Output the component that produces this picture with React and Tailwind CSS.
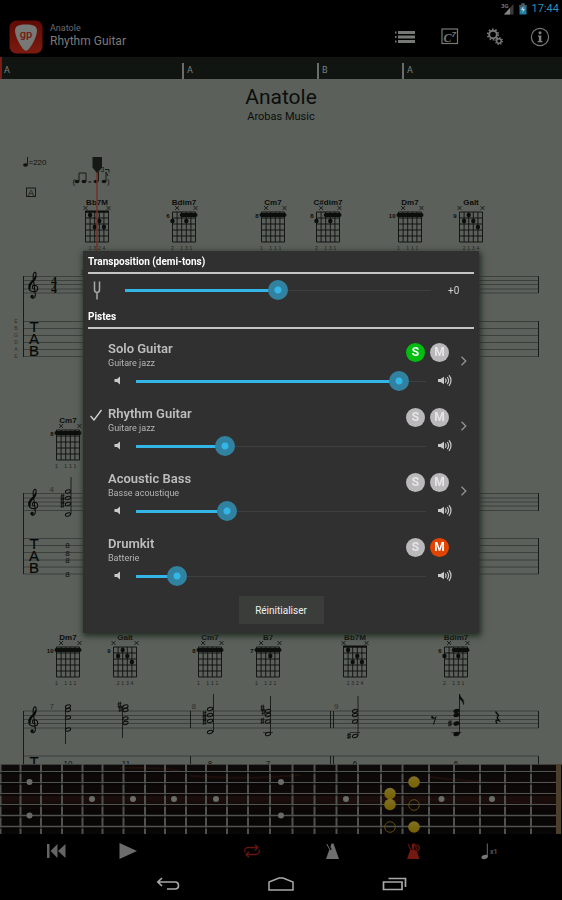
// App.jsx
import React, { useState } from 'react';

const STRING_GAP = 4.6;
const FRET_GAP = 6;

const SHAPES = {
  Bb7M: { mutes: [0, 5], dots: [[1, 0], [3, 1], [2, 2], [4, 2]], fingers: [[1, 1], [2, 3], [3, 2], [4, 4]], nut: true },
  dim: { mutes: [1, 5], barre: [2, 5], dots: [[0, 1], [3, 1]], fingers: [[0, 2], [2, 1], [3, 3], [4, 1]] },
  m7: { mutes: [1, 5], barre: [0, 5], dots: [], fingers: [[0, 1], [2, 1], [3, 1], [4, 1]] },
  seven: { mutes: [1, 5], barre: [0, 5], dots: [[3, 1]], fingers: [[0, 1], [2, 1], [3, 2], [4, 1]] },
  alt: { mutes: [0, 5], dots: [[2, 0], [1, 1], [3, 1], [4, 2]], fingers: [[1, 2], [2, 1], [3, 3], [4, 4]] },
};

const CHORDS = [
  { name: 'Bb7M', shape: 'Bb7M', x: 85.5, y: 212 },
  { name: 'Bdim7', shape: 'dim', fret: 6, x: 172.5, y: 212 },
  { name: 'Cm7', shape: 'm7', fret: 8, x: 261.5, y: 212 },
  { name: 'C#dim7', shape: 'dim', fret: 8, x: 316.5, y: 212 },
  { name: 'Dm7', shape: 'm7', fret: 10, x: 398.5, y: 212 },
  { name: 'Galt', shape: 'alt', fret: 9, x: 459.5, y: 212 },
  { name: 'Cm7', shape: 'm7', fret: 8, x: 56.5, y: 430 },
  { name: 'Dm7', shape: 'm7', fret: 10, x: 56.5, y: 647 },
  { name: 'Galt', shape: 'alt', fret: 9, x: 113.5, y: 647 },
  { name: 'Cm7', shape: 'm7', fret: 8, x: 198.5, y: 647 },
  { name: 'B7', shape: 'seven', fret: 7, x: 256.5, y: 647 },
  { name: 'Bb7M', shape: 'Bb7M', x: 343.5, y: 647 },
  { name: 'Bdim7', shape: 'dim', fret: 6, x: 444.5, y: 647 },
];

const VOICINGS = [
  { x: 68, notes: [491.5, 498, 504, 514.5], stem: [71, 477, 514], sharps: [[62.5, 497], [62.5, 501], [62.5, 505]] },
  { x: 68, notes: [706.5, 710, 717.5, 729.5], stem: [65.5, 706, 744], sharps: [] },
  { x: 125.5, notes: [706.5, 710, 718.5, 723], stem: [122.5, 706, 738], sharps: [[119.5, 705], [120.5, 709]] },
  { x: 210, notes: [709, 715, 721, 732], stem: [213.5, 694, 732], sharps: [[204.5, 714], [204.5, 718], [204.5, 722]] },
  { x: 268, notes: [711, 715, 721.5, 734], stem: [270.5, 696, 734], sharps: [[262.5, 708], [263.5, 712], [262.5, 721]], ledger: 732.5 },
  { x: 355, notes: [711, 715, 721.5, 736], stem: [358, 696, 736], sharps: [[349, 736]], ledger: 732.5 },
  { x: 456.5, notes: [711, 715, 723.5, 734], stem: [459.5, 694, 734], sharps: [[450, 723.5]], ledger: 732.5, filled: true },
];

const FRETS = [0.5, 20.5, 41, 62, 82.5, 102.5, 123.5, 145, 165, 186, 206, 227, 248, 270, 292.5, 314.5, 336.5, 358, 381, 402.5, 429, 454, 480, 505, 531];
const STRINGS = [771.5, 782.5, 793.5, 804.5, 815.5, 826.5];
const INLAYS = [[29.5, 782], [29.5, 815.5], [92, 799], [133, 799], [174, 799], [216, 799], [281, 782], [281, 815.5], [346, 799], [441.5, 799], [492, 799]];

const TRACKS = [
  { name: 'Solo Guitar', instrument: 'Guitare jazz', volume: 115, solo: true, more: true },
  { name: 'Rhythm Guitar', instrument: 'Guitare jazz', volume: 39, current: true, more: true },
  { name: 'Acoustic Bass', instrument: 'Basse acoustique', volume: 40, more: true },
  { name: 'Drumkit', instrument: 'Batterie', volume: 18, mute: true },
];

function ChordDiagram({ name, shape, fret, x, y }) {
  const s = SHAPES[shape];
  const col = (i) => x + i * STRING_GAP;
  const row = (i) => y + 3 + i * FRET_GAP;
  return (
    <g stroke="#0c0e0c" fill="#0c0e0c">
      <text x={x + 11.5} y={y - 7} fontSize="8" fontWeight="700" textAnchor="middle" stroke="none">{name}</text>
      {fret && <text x={x - 3} y={y + 6} fontSize="6" fontWeight="700" textAnchor="end" stroke="none">{fret}</text>}
      {s.mutes.map((m) => (
        <path key={m} d={`M${col(m) - 2} ${y - 6}l4 4m0-4l-4 4`} strokeWidth=".8" />
      ))}
      {[0, 1, 2, 3, 4, 5].map((i) => (
        <path key={i} d={`M${col(i)} ${y}v30M${x} ${y + i * FRET_GAP}h23`} strokeWidth=".9" />
      ))}
      {s.nut && <path d={`M${x - 0.5} ${y - 0.5}h24`} strokeWidth="2" />}
      {s.barre && <path d={`M${col(s.barre[0])} ${row(0)}H${col(s.barre[1])}`} strokeWidth="4" strokeLinecap="round" />}
      {s.dots.map(([c, r]) => <circle key={`${c}-${r}`} cx={col(c)} cy={row(r)} r="2.2" stroke="none" />)}
      {s.fingers.map(([c, n]) => (
        <text key={c} x={col(c)} y={y + 37.5} fontSize="5" textAnchor="middle" stroke="none" opacity=".75">{n}</text>
      ))}
    </g>
  );
}

function Clef({ y }) {
  return (
    <g transform={`translate(28.5 ${y - 5.5})`} fill="none" stroke="#090b09">
      <path d="M5.4 18.2C3.2 17.4 3.4 14.2 5.8 14.2C10.4 14.2 10.4 20.6 5.4 20.6C-.6 20.6-.8 14.8 2 11.6C4.6 9 8 7 7.6 2.8C7.2 0 5.4 1.4 4.8 3.6C4.2 6 5 9 5.6 13L6.8 23.4C7.2 27.8 3 28.4 2.6 25.6" strokeWidth="1.1" />
      <path d="M1.4 18C.6 15.4 2.4 12 5 9.8C6.4 8.6 7.2 7 7.4 5" strokeWidth="1.8" />
      <circle cx="3.6" cy="25.4" r="1.6" fill="#090b09" stroke="none" />
    </g>
  );
}

function Voicing({ x, notes, stem, sharps, ledger, filled }) {
  return (
    <g stroke="#0c0e0c" fill="none">
      {notes.map((n) => (
        <ellipse key={n} cx={x} cy={n} rx="2.7" ry="1.6" strokeWidth="1" fill={filled ? '#0c0e0c' : 'none'} transform={`rotate(-20 ${x} ${n})`} />
      ))}
      <path d={`M${stem[0]} ${stem[1]}V${stem[2]}`} strokeWidth=".8" />
      {sharps.map(([a, b]) => (
        <path key={`${a}-${b}`} d={`M${a - 0.8} ${b - 3}v6M${a + 0.8} ${b - 3.4}v6M${a - 2} ${b - 0.8}l4-.8M${a - 2} ${b + 1.6}l4-.8`} strokeWidth=".8" />
      ))}
      {ledger && <path d={`M${x - 5} ${ledger}h10`} strokeWidth=".6" />}
      {filled && <path d={`M${stem[0]} ${stem[1]}c.5 4 5.5 5 4 10.500c-.5-3-2-4.500-4-5.500z`} fill="#0c0e0c" strokeWidth=".6" />}
    </g>
  );
}

function Lines({ ys }) {
  return <path d={ys.map((y) => `M23.500 ${y}H538.500`).join('')} stroke="#353935" strokeWidth=".8" fill="none" />;
}

function Score() {
  return (
    <svg viewBox="0 129 562 635" className="block h-auto w-full font-['Liberation_Sans',sans-serif]" role="img" aria-label="Partition">
      {/* tempo, section mark, swing feel */}
      <g fill="#111411">
        <ellipse cx="25.500" cy="165" rx="2.400" ry="1.700" />
        <path d="M27.500 165v-8" stroke="#111411" strokeWidth=".9" />
        <text x="28.500" y="164.500" fontSize="8">=220</text>
        <rect x="26.500" y="188" width="9" height="8.500" fill="none" stroke="#111411" strokeWidth=".9" />
        <text x="31" y="195.500" fontSize="9" textAnchor="middle">A</text>
        <text x="72.500" y="184" fontSize="8">(</text>
        <text x="107" y="184" fontSize="8">)</text>
        <text x="88" y="184" fontSize="6" fontWeight="700">=</text>
        <ellipse cx="77" cy="181.500" rx="2.400" ry="1.800" />
        <ellipse cx="84" cy="181.500" rx="2.400" ry="1.800" />
        <ellipse cx="96" cy="181.500" rx="2.400" ry="1.800" />
        <ellipse cx="104" cy="181.500" rx="2.400" ry="1.800" />
        <path d="M79 181v-8h7v8M98.500 181v-9M106 181v-9l2 4M105 169.500h4v3" fill="none" stroke="#111411" strokeWidth=".9" />
        <text x="100.500" y="172" fontSize="7">3</text>
      </g>

      {CHORDS.map((c) => <ChordDiagram key={`${c.x}-${c.y}`} {...c} />)}

      <Lines ys={[276.5, 280.5, 284.5, 289, 293]} />
      <Lines ys={[321.5, 328.5, 335.5, 342.5, 349.5, 356.5]} />
      <Lines ys={[493.5, 498, 502, 506, 510.5]} />
      <Lines ys={[538.5, 545.5, 552.5, 560, 567, 574]} />
      <Lines ys={[711, 715.5, 719.5, 723.5, 728]} />
      <Lines ys={[756]} />
      <path
        d="M23.500 276V357M23.500 493V574M23.500 711V764M538.500 276V293M538.500 321V357M538.500 493V511M538.500 538V574M538.500 711V728M538.500 756V764M190.500 711V728M190.500 756V764M330.500 711V728M333.500 711V728M330.500 756V764M333.500 756V764"
        stroke="#111411" strokeWidth=".9" fill="none"
      />
      <Clef y={276.5} />
      <Clef y={493.5} />
      <Clef y={711} />

      <g fontSize="12" fontWeight="700" fill="#090b09" className="font-['Liberation_Serif',serif]">
        <text x="51" y="285">4</text>
        <text x="51" y="293">4</text>
      </g>
      <g fontSize="15" fill="#060806" stroke="#060806" strokeWidth=".2" textAnchor="middle">
        {[332, 549].map((y) => (
          <React.Fragment key={y}>
            <text x="34" y={y}>T</text>
            <text x="34" y={y + 12}>A</text>
            <text x="34" y={y + 24}>B</text>
          </React.Fragment>
        ))}
        <text x="34" y="767">T</text>
      </g>
      <g fontSize="5" fill="#2c302c" textAnchor="middle">
        {['E', 'B', 'G', 'D', 'A', 'E'].map((n, i) => <text key={i} x="16" y={323 + i * 7}>{n}</text>)}
      </g>
      <g fontSize="8" fill="#2c302c">
        <text x="80" y="275">1</text>
        <text x="49.500" y="492">4</text>
        <text x="49.500" y="709">7</text>
        <text x="191.500" y="709">8</text>
        <text x="334" y="709">9</text>
      </g>
      {VOICINGS.map((v) => <Voicing key={`${v.x}-${v.notes[0]}`} {...v} />)}
      {/* rests */}
      <path d="M432 717.500c1 1.500 3 1 4-.8l-2.600 8" fill="none" stroke="#0c0e0c" strokeWidth="1" />
      <circle cx="432.300" cy="717.200" r="1.200" fill="#0c0e0c" />
      <path d="M495.500 711.500l3 4c-2 1.800-1.500 2.500.5 5c-3-1-4 .5-2 3" fill="none" stroke="#0c0e0c" strokeWidth="1.400" />

      <g fontSize="8" fill="#0c0e0c" textAnchor="middle">
        {[548, 555.5, 562.5, 577].map((y) => <text key={y} x="67.500" y={y}>8</text>)}
        <text x="68" y="766">10</text>
        <text x="126" y="766">11</text>
        <text x="210" y="766">8</text>
        <text x="268" y="766">7</text>
        <text x="355" y="766">6</text>
        <text x="456" y="766">6</text>
      </g>

      {/* playhead */}
      <path d="M97 170V280" stroke="#74302a" strokeWidth="1.500" />
      <path d="M92.500 157h9.500v10.500l-4 5h-1.500l-4-5z" fill="#161816" />
    </svg>
  );
}

function Fretboard() {
  return (
    <svg viewBox="0 764 562 70" className="block h-auto w-full" role="img" aria-label="Manche">
      <defs>
        <linearGradient id="wood" x1="0" y1="0" x2="0" y2="1">
          <stop offset="0" stopColor="#0e0a09" />
          <stop offset=".38" stopColor="#0b0807" />
          <stop offset=".48" stopColor="#1c0e0b" />
          <stop offset=".58" stopColor="#150b09" />
          <stop offset=".66" stopColor="#090605" />
          <stop offset="1" stopColor="#080606" />
        </linearGradient>
        <linearGradient id="gold" x1="0" y1="0" x2="0" y2="1">
          <stop offset="0" stopColor="#847127" />
          <stop offset=".5" stopColor="#7a6812" />
          <stop offset="1" stopColor="#776300" />
        </linearGradient>
      </defs>
      <rect x="0" y="764" width="562" height="70" fill="url(#wood)" />
      <path d="M120 768q40-1 60 3M190 776q60 4 110-1M430 777q60 8 126 5M330 803q110-8 226 2" fill="none" stroke="#1e0f0b" strokeWidth="2" />
      <path d="M0 764.500H562" stroke="#3d403d" />
      <rect x="556" y="764" width="5" height="70" fill="#4b3e2a" />
      {FRETS.map((x) => <path key={x} d={`M${x} 764v70`} stroke="#4f524f" strokeWidth="2" />)}
      {STRINGS.map((y, i) => (
        <g key={y}>
          <path d={`M0 ${y + 1.5}H556`} stroke="#040404" strokeWidth="1" />
          <path d={`M0 ${y}H556`} stroke="#505350" strokeWidth={i > 3 ? 1.6 : 1.2} />
        </g>
      ))}
      {INLAYS.map(([x, y]) => <circle key={`${x}-${y}`} cx={x} cy={y} r="3" fill="#686b68" />)}
      {[[390, 793.5], [390, 804.5], [414, 782], [414, 827]].map(([x, y]) => (
        <circle key={`${x}-${y}`} cx={x} cy={y} r="5.800" fill="url(#gold)" />
      ))}
      {[[414, 805], [390, 827]].map(([x, y]) => (
        <circle key={`${x}-${y}`} cx={x} cy={y} r="5.300" fill="none" stroke="#5e4d0c" />
      ))}
    </svg>
  );
}

function Slider({ label, max, value, onChange }) {
  const ratio = value / max;
  return (
    <div className="relative flex h-5 min-w-0 flex-1 items-center">
      <span className="absolute inset-x-[10px] h-px bg-[#3f3f3f]" />
      <span className="absolute left-[10px] h-[3px] bg-[#33b5e5]" style={{ width: `calc((100% - 20px) * ${ratio})` }} />
      <input
        type="range"
        aria-label={label}
        min="0"
        max={max}
        value={value}
        onChange={(e) => onChange(Number(e.target.value))}
        className="relative h-5 w-full cursor-pointer appearance-none bg-transparent [&::-webkit-slider-thumb]:size-5 [&::-webkit-slider-thumb]:appearance-none [&::-webkit-slider-thumb]:rounded-full [&::-webkit-slider-thumb]:bg-[radial-gradient(circle,#33b5e5_3px,#3182a1_4px)]"
      />
    </div>
  );
}

function Speaker({ loud }) {
  return (
    <svg viewBox={loud ? '0 0 14 12' : '0 0 8 12'} className={loud ? 'h-3 w-[14px] shrink-0' : 'h-3 w-2 shrink-0'} fill="#c9c9c9" aria-hidden="true">
      {loud ? (
        <>
          <path d="M0 4h2.500L6 1.800v7.400L2.500 7H0z" />
          <path d="M7.300 3.500q1.500 2 0 4.200M9.200 2q2.800 3.500 0 7.200M11 .3q4 5 0 10.600" fill="none" stroke="#c9c9c9" strokeWidth="1.200" />
        </>
      ) : (
        <path d="M1.500 4H4L7 1.500v8L4 7H1.500z" />
      )}
    </svg>
  );
}

function Track({ track, onChange }) {
  const round = 'size-[19px] rounded-full text-center text-[12px] leading-[19px] font-bold';
  return (
    <li className="flex h-[65px] pt-3">
      <div className="w-[25px] shrink-0 pt-[3px] pl-[7px]">
        {track.current && (
          <svg viewBox="0 0 12 12" className="size-3" fill="none" stroke="#d0d0d0" strokeWidth="1.400" role="img" aria-label="Piste active">
            <path d="M.6 7L4 11L11.500 1" />
          </svg>
        )}
      </div>
      <div className="min-w-0 flex-1">
        <div className="flex h-7 items-start pr-[10px]">
          <div className="min-w-0 flex-1">
            <h3 className="text-[13px] leading-4 font-semibold text-[#bdbdbd]">{track.name}</h3>
            <p className="text-[9px] leading-3 text-[#b5b5b5]">{track.instrument}</p>
          </div>
          <div className="flex gap-[5px] pt-[2px]">
            <button
              type="button"
              aria-label={`Solo ${track.name}`}
              aria-pressed={!!track.solo}
              onClick={() => onChange({ solo: !track.solo })}
              className={`${round} ${track.solo ? 'bg-[#00bd10] text-white' : 'bg-[#bab8bb] text-[#e6e6e6]'}`}
            >
              S
            </button>
            <button
              type="button"
              aria-label={`Muet ${track.name}`}
              aria-pressed={!!track.mute}
              onClick={() => onChange({ mute: !track.mute })}
              className={`${round} ${track.mute ? 'bg-[#e24300] text-white' : 'bg-[#bab8bb] text-[#e6e6e6]'}`}
            >
              M
            </button>
          </div>
          <div className="ml-[10px] w-[10px] pt-[15px]">
            {track.more && (
              <button type="button" aria-label={`Options ${track.name}`} className="block">
                <svg viewBox="0 0 10 10" className="size-[10px]" fill="none" stroke="#989898" strokeWidth="1.200">
                  <path d="M2.500 .8L6.800 5L2.500 9.200" />
                </svg>
              </button>
            )}
          </div>
        </div>
        <div className="flex items-center pt-[2px] pr-[27px] pl-[5px]">
          <Speaker />
          <div className="mr-[2px] ml-[5px] flex flex-1">
            <Slider label={`Volume ${track.name}`} max={127} value={track.volume} onChange={(volume) => onChange({ volume })} />
          </div>
          <Speaker loud />
        </div>
      </div>
    </li>
  );
}

function SectionTitle({ children }) {
  return (
    <h2 className="mx-[5px] h-[23px] border-b-2 border-[#c4c4c4] pt-px text-[10px] leading-5 font-bold text-white">{children}</h2>
  );
}

function MixerDialog() {
  const [tone, setTone] = useState(12);
  const [tracks, setTracks] = useState(TRACKS);
  const update = (index, patch) => setTracks(tracks.map((t, i) => (i === index ? { ...t, ...patch } : t)));
  const reset = () => {
    setTone(12);
    setTracks(TRACKS);
  };

  return (
    <div className="fixed inset-x-0 top-4 bottom-8 flex items-center justify-center">
      <div role="dialog" aria-label="Pistes" className="w-full max-w-[396px] bg-[#303030] pb-[9px] shadow-[1px_2px_6px_1px_#1f2d21]">
        <SectionTitle>Transposition (demi-tons)</SectionTitle>
        <div className="flex h-8 items-center pl-[10px]">
          <svg viewBox="0 0 8 19" className="h-[19px] w-2 shrink-0" fill="none" stroke="#a8a8a8" strokeWidth="1.500" aria-hidden="true">
            <path d="M1.500 .5V8.500Q1.500 11.500 4 11.500Q6.500 11.500 6.500 8.500V.5M4 11.500V18.500" />
          </svg>
          <div className="mr-[7px] ml-[14px] flex flex-1">
            <Slider label="Transposition" max={24} value={tone} onChange={setTone} />
          </div>
          <output className="w-[31px] text-[10px] text-[#d0d0d0]">{tone >= 12 ? `+${tone - 12}` : tone - 12}</output>
        </div>
        <SectionTitle>Pistes</SectionTitle>
        <ul>
          {tracks.map((t, i) => <Track key={t.name} track={t} onChange={(patch) => update(i, patch)} />)}
        </ul>
        <div className="flex justify-center pt-[7px]">
          <button type="button" onClick={reset} className="h-7 w-[85px] bg-[#3b3d3b] text-[10px] text-[#f0f0f0]">
            Réinitialiser
          </button>
        </div>
      </div>
    </div>
  );
}

function StatusBar() {
  return (
    <div className="flex h-4 items-center justify-end gap-[5px] pt-[2px] pr-[3px]">
      <svg viewBox="0 0 13 12" className="h-3 w-[13px]" aria-hidden="true">
        <text x="0" y="5" fontSize="6" fontWeight="700" fill="#777" className="font-['Roboto',sans-serif]">3G</text>
        <path d="M3 11.500L12.500 1V11.500z" fill="#3a3a3a" />
        <path d="M3 11.500L9 5V11.500z" fill="#858585" />
      </svg>
      <svg viewBox="0 0 8 12" className="h-3 w-2" aria-hidden="true">
        <path d="M.5 2H2.500V.5H5.500V2H7.500V11.500H.5z" fill="#2380a4" />
        <path d="M.5 2H2.500V.5H5.500V2H7.500V4H.5z" fill="#4b5a60" />
        <path d="M4.500 3L2 7H4L3.200 10L6 6H4.200z" fill="#c8d2d5" />
      </svg>
      <span className="text-[11px] leading-[14px] text-[#2a8fb8]">17:44</span>
    </div>
  );
}

function Header() {
  const item = 'flex h-[41px] w-[45px] items-center justify-center';
  return (
    <header className="flex h-[41px] items-center pl-[9px]">
      <svg viewBox="0 0 34 34" className="size-[34px]" role="img" aria-label="Guitar Pro">
        <defs>
          <linearGradient id="logo" x1="0" y1="0" x2="0" y2="1">
            <stop offset="0" stopColor="#600a05" />
            <stop offset="1" stopColor="#7b1b10" />
          </linearGradient>
        </defs>
        <rect x=".5" y=".5" width="33" height="33" rx="7" fill="url(#logo)" />
        <path d="M17 4.500C24 4.500 28 6 28 10.500C28 17 22 27 19 29.800Q17 31.500 15 29.800C12 27 6 17 6 10.500C6 6 10 4.500 17 4.500z" fill="#777976" />
        <text x="17" y="18" fontSize="11" fontWeight="500" textAnchor="middle" fill="#74170f" className="font-['Roboto',sans-serif]">gp</text>
      </svg>
      <div className="flex-1 pb-[3px] pl-[7px]">
        <p className="text-[9px] leading-[11px] text-[#6c6c6c]">Anatole</p>
        <p className="text-[12px] leading-[14px] text-[#7a7a7a]">Rhythm Guitar</p>
      </div>
      <nav className="flex" aria-label="Outils">
        <button type="button" aria-label="Pistes" className={item}>
          <svg viewBox="0 0 22 14" className="h-[14px] w-[22px]" fill="#767976">
            <path d="M4 1h17v3H4zM4 5.500h17v3H4zM4 10h17v3H4zM1 1.500h1.500v2H1zM1 6h1.500v2H1zM1 10.500h1.500v2H1z" />
          </svg>
        </button>
        <button type="button" aria-label="Accords" className={item}>
          <svg viewBox="0 0 18 17" className="h-[17px] w-[18px]" fill="#767976">
            <rect x="1" y="1" width="15.500" height="14.500" fill="none" stroke="#767976" strokeWidth="1.200" />
            <text x="2.500" y="13.500" fontSize="12" fontWeight="700" fontStyle="italic" className="font-['Liberation_Serif',serif]">C</text>
            <text x="10.500" y="9" fontSize="8" fontWeight="700" fontStyle="italic" className="font-['Liberation_Sans',sans-serif]">7</text>
          </svg>
        </button>
        <button type="button" aria-label="Réglages" className={item}>
          <svg viewBox="0 0 18 18" className="size-[18px]" fill="none" stroke="#767976">
            <circle cx="7" cy="6.500" r="3.800" strokeWidth="1.900" />
            <circle cx="7" cy="6.500" r="5.200" strokeWidth="1.800" strokeDasharray="1.600 1.670" />
            <circle cx="13" cy="13" r="2.300" strokeWidth="1.400" />
            <circle cx="13" cy="13" r="3.400" strokeWidth="1.300" strokeDasharray="1.300 1.370" />
          </svg>
        </button>
        <button type="button" aria-label="Informations" className={item}>
          <svg viewBox="0 0 20 20" className="size-5" fill="#7d807d">
            <circle cx="10" cy="10" r="8.600" fill="none" stroke="#767976" strokeWidth="1.200" />
            <circle cx="10" cy="5.800" r="1.500" />
            <path d="M8 8.500h3.300V14h1.200v1.300H7.700V14h1.200V9.800H8z" />
          </svg>
        </button>
      </nav>
    </header>
  );
}

function SectionBar() {
  const mark = 'mt-[6px] flex h-4 items-center border-l-2 border-[#6a6d6a] pl-[3px]';
  return (
    <div className="grid h-[22px] grid-cols-[182fr_135fr_85fr_160fr] bg-[#101512] text-[9px] text-[#7d807d]">
      <div className="flex items-center border-l-2 border-[#7b1d12] pt-[5px] pl-[2px]">A</div>
      <div className={mark}>A</div>
      <div className={mark}>B</div>
      <div className={mark}>A</div>
    </div>
  );
}

function Transport() {
  const wide = 'flex h-[34px] w-[81px] items-center justify-center';
  const narrow = 'flex h-[34px] w-18 items-center justify-center';
  return (
    <div className="flex justify-between pr-[36px] pl-5">
      <div className="flex">
        <button type="button" aria-label="Début" className={narrow}>
          <svg viewBox="0 0 19 14" className="h-[14px] w-[19px]" fill="#656565">
            <path d="M0 0h2.500v14H0zM10.500 0v14L3.500 7zM18.500 0v14L11 7z" />
          </svg>
        </button>
        <button type="button" aria-label="Lecture" className={narrow}>
          <svg viewBox="0 0 18 16" className="h-4 w-[18px]" fill="#6c6c6c"><path d="M.5 0L18 8L.5 16z" /></svg>
        </button>
      </div>
      <div className="flex">
        <button type="button" aria-label="Boucle" className={wide}>
          <svg viewBox="0 0 18 14" className="h-[14px] w-[18px]" fill="none" stroke="#64170f" strokeWidth="1.300">
            <path d="M2 8.500Q.8 3.500 5.500 3.500H14M12 .8L15 3.500L12 6.200M16 5.500Q17.200 10.500 12.500 10.500H4M6 7.800L3 10.500L6 13.200" />
          </svg>
        </button>
        <button type="button" aria-label="Métronome" className={wide}>
          <svg viewBox="0 0 13 16" className="h-4 w-[13px]" fill="#6f6f6f">
            <path d="M5.500 .5h2L13 16H0z" />
            <path d="M1.500 1L4.800 7" stroke="#000" strokeWidth="2.200" />
            <path d="M.8 1L4.500 8" stroke="#6f6f6f" strokeWidth="1" />
          </svg>
        </button>
        <button type="button" aria-label="Décompte" className={wide}>
          <svg viewBox="0 0 13 16" className="h-4 w-[13px]" fill="#74190f">
            <path d="M5.500 .5h2L12.500 16H0z" />
            <path d="M1.800 1L5 7" stroke="#000" strokeWidth="2" />
            <path d="M1 1L4.500 8" stroke="#74190f" strokeWidth="1" />
            <circle cx="9.300" cy="5" r="3.200" fill="#1c0503" stroke="#74190f" />
            <path d="M9 3v2.500l1.200 1" fill="none" stroke="#74190f" strokeWidth=".9" />
          </svg>
        </button>
        <button type="button" aria-label="Vitesse x1" className={narrow}>
          <svg viewBox="0 0 18 18" className="size-[18px]" fill="#777">
            <ellipse cx="3.600" cy="15" rx="3.200" ry="2" transform="rotate(-12 3.600 15)" />
            <path d="M6.300 15V1.500" stroke="#777" strokeWidth=".9" />
            <text x="9" y="12" fontSize="7" fontWeight="700" fill="#555" className="font-['Roboto',sans-serif]">x1</text>
          </svg>
        </button>
      </div>
    </div>
  );
}

function NavBar() {
  const item = 'flex h-8 w-[113px] items-center justify-center';
  return (
    <nav className="flex justify-center" aria-label="Système">
      <button type="button" aria-label="Retour" className={item}>
        <svg viewBox="0 0 24 14" className="h-[14px] w-6" fill="none" stroke="#a8a8a8" strokeWidth="1.700">
          <path d="M6 1L1.800 5L6 9M2 5H19Q22.500 5 22.500 8.500Q22.500 12 19 12H11" />
        </svg>
      </button>
      <button type="button" aria-label="Accueil" className={item}>
        <svg viewBox="0 0 26 14" className="h-[14px] w-[26px]" fill="none" stroke="#a8a8a8" strokeWidth="1.500">
          <path d="M1 13V5L11 1H15L25 5V13z" />
        </svg>
      </button>
      <button type="button" aria-label="Applications récentes" className={item}>
        <svg viewBox="0 0 25 14" className="h-[14px] w-[25px]" fill="none" stroke="#a8a8a8" strokeWidth="1.700">
          <path d="M1.500 5h18.500v7.500H1.500zM6.500 1.500h17V10" />
        </svg>
      </button>
    </nav>
  );
}

export default function App() {
  return (
    <div className="flex min-h-screen flex-col bg-black font-['Roboto',sans-serif]">
      <StatusBar />
      <Header />
      <SectionBar />
      <main className="flex-1 bg-[#5b605b]">
        <div className="pt-1 pb-[6px] text-center text-[#0c0e0c]">
          <h1 className="text-[21px] leading-7">Anatole</h1>
          <p className="text-[11px] leading-3">Arobas Music</p>
        </div>
        <Score />
      </main>
      <Fretboard />
      <Transport />
      <NavBar />
      <MixerDialog />
    </div>
  );
}
